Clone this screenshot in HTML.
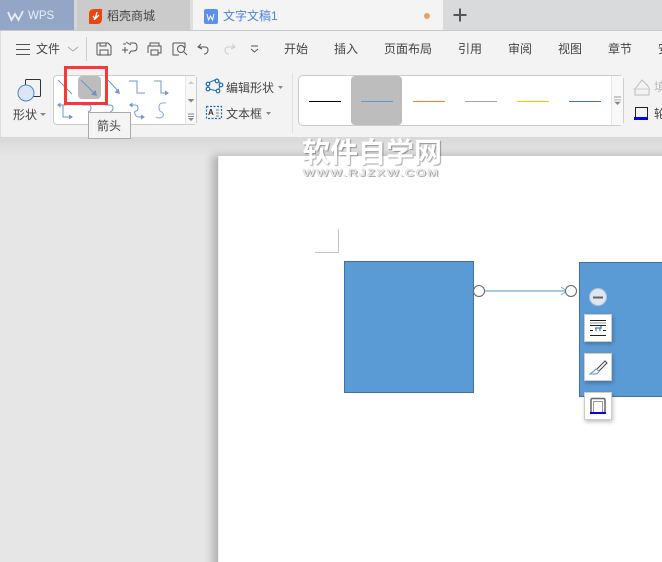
<!DOCTYPE html>
<html><head><meta charset="utf-8">
<style>
*{box-sizing:border-box}
html,body{margin:0;padding:0;width:662px;height:562px;overflow:hidden}
body{position:relative;background:#e6e6e6;font-family:"Liberation Sans","Noto Sans CJK SC",sans-serif;font-size:12px;color:#444}
#w{position:absolute;left:0;top:0;width:662px;height:562px;overflow:hidden;filter:blur(.25px)}
.a{position:absolute}
.t{position:absolute;white-space:nowrap;line-height:16px;font-size:12px}
svg{position:absolute;overflow:visible}
</style></head><body><div id="w">
<!-- tab bar -->
<div class="a" style="left:0;top:0;width:662px;height:31px;background:#d9dadc;border-bottom:1px solid #c8c8c8"></div>
<div class="a" style="left:0;top:0;width:74px;height:30px;background:#94a6c6"></div>
<div class="a" style="left:74px;top:0;width:3px;height:30px;background:#d4d6da"></div>
<div class="a" style="left:77px;top:0;width:113px;height:30px;background:#cbcbcb"></div>
<div class="a" style="left:190px;top:0;width:3px;height:30px;background:#dedede"></div>
<div class="a" style="left:193px;top:0;width:250px;height:30px;background:#f4f4f4"></div>
<svg style="left:0;top:0" width="662" height="31">
<path d="M8 12L11.500 20L15 14L18.500 20L23 11" fill="none" stroke="#e8edf5" stroke-width="1.800"/>
<path d="M89 14q0-5 5-5h8v10q0 5-5 5h-8z" fill="#e8470f"/>
<path d="M97 12q-1 5-3 8M93 16l2 3 4-4" fill="none" stroke="#fff" stroke-width="1.300"/>
<rect x="204" y="9" width="14" height="15" rx="2" fill="#5b8ff0"/>
<path d="M207 14l1.500 6 2-4 2 4 1.500-6" fill="none" stroke="#fff" stroke-width="1"/>
<circle cx="427" cy="16" r="3" fill="#e8a25f"/>
<path d="M453.500 15h13M460 8.500v13" stroke="#555" stroke-width="2"/>
</svg>
<div class="t" style="left:28px;top:8px;font-size:11.500px;color:#e8edf5">WPS</div>
<div class="t" style="left:107px;top:8px;color:#444">稻壳商城</div>
<div class="t" style="left:223px;top:8px;color:#4a82e0">文字文稿1</div>

<!-- ribbon -->
<div class="a" style="left:0;top:31px;width:662px;height:106px;background:#f3f3f3;border-left:1px solid #ddd"></div>
<div class="a" style="left:0;top:137px;width:662px;height:19px;background:linear-gradient(#d8d8d8,#e6e6e6)"></div>
<svg style="left:0;top:0" width="662" height="70" fill="none" stroke="#555" stroke-width="1">
<path d="M16 44.500h14M16 49.500h14M16 54.500h14"/>
<path d="M68 47l5 4 5-4" stroke="#aaa"/>
<path d="M86.500 37v24" stroke="#ccc"/>
<path d="M98 43h10l3 3v8q0 1-1 1H98q-1 0-1-1V44q0-1 1-1zM100 55v-5h8v5M100 43v3h6v-3"/>
<path d="M123 44h3M130 43h4q3 0 3 4t-3 4h-3l-2 3M126 42l5 3M122 50h6M125 47v6"/>
<path d="M150 46v-3h9v3M148 53v-7h13v7h-3M151 50h7v5h-7z"/>
<path d="M173 43h12v5M173 43v12h6"/><circle cx="181" cy="49" r="3.500"/><path d="M184 52l3 3"/>
<path d="M201 44l-3 3 4 2M199 47h6q3 0 3 3t-3 4h-1"/>
<path d="M232 44l3 3-4 2M234 47h-6q-3 0-3 3t3 4h1" stroke="#ccc"/>
<path d="M251 46h7M251 49l3.500 3 3.500-3"/>
</svg>
<div class="t" style="left:36px;top:41px">文件</div>
<div class="t" style="left:284px;top:41px">开始</div>
<div class="t" style="left:334px;top:41px">插入</div>
<div class="t" style="left:384px;top:41px">页面布局</div>
<div class="t" style="left:458px;top:41px">引用</div>
<div class="t" style="left:508px;top:41px">审阅</div>
<div class="t" style="left:558px;top:41px">视图</div>
<div class="t" style="left:608px;top:41px">章节</div>
<div class="t" style="left:658px;top:41px">安全</div>

<!-- shape button -->
<svg style="left:0;top:65px" width="60" height="50" fill="none">
<rect x="25.500" y="14.500" width="15" height="17" rx="1" stroke="#333"/>
<circle cx="26" cy="28" r="8" fill="#dce6f2" stroke="#4a86c8"/>
</svg>
<div class="t" style="left:13px;top:107px">形状</div>
<svg style="left:40px;top:113px" width="6" height="4"><path d="M0 0h6l-3 3z" fill="#888"/></svg>

<!-- gallery -->
<div class="a" style="left:53px;top:75px;width:144px;height:50px;background:#fff;border:1px solid #ccc;border-radius:4px"></div>
<div class="a" style="left:185px;top:76px;width:11px;height:48px;background:#f7f7f7;border-left:1px solid #e8e8e8"></div>
<div class="a" style="left:78px;top:76px;width:23px;height:23px;background:#bdbdbd;border-radius:4px"></div>
<svg style="left:0;top:70px" width="200" height="60" fill="none" stroke="#7396d0" stroke-width="1">
<path d="M58 10l14 14" stroke="#7f93ad"/>
<path d="M81 10l15 15" stroke="#6f8fc8"/><path d="M97 26l-6-1.500 4.500-4.500z" fill="#6f8fc8" stroke="none"/>
<path d="M108 10l11 12"/><path d="M120 24l-5.500-1.500 4-4z" fill="#7396d0" stroke="none"/>
<path d="M129 11h8v12h8"/>
<path d="M154 11h7v12h6"/><path d="M169 23l-4-2.500v5z" fill="#7396d0" stroke="none"/>
<path d="M63 35v12h9M60 35h6"/><path d="M57 35l3.500-2.500v5zM73 47l-4-2.500v5z" fill="#7396d0" stroke="none"/>
<path d="M82 35h6q3 0 3 3t-3 4"/>
<path d="M105 35h5q3 0 3 3t-3 4"/>
<path d="M132 35h3q3 0 3 3v0q0 3-2 3t-1 3q1 3 4 3h4"/><path d="M129 35l3.500-2.500v5zM145 47l-4-2.500v5z" fill="#7396d0" stroke="none"/>
<path d="M166 33q-7-1-7 4t3 5q3 3 0 5t-6 0" stroke="#88a5d5"/>
</svg>
<svg style="left:185px;top:76px" width="12" height="48">
<path d="M3 8l3-3 3 3z" fill="#ccc"/><path d="M2.500 23h7l-3.500 3.500z" fill="#888"/>
<path d="M3 38h6M3 40.500h6" stroke="#888"/><path d="M3 42h6l-3 3z" fill="#888"/>
</svg>

<!-- red box -->
<div class="a" style="left:64px;top:66px;width:44px;height:39px;border:3px solid #f73838"></div>

<!-- tooltip -->
<div class="a" style="left:88px;top:112px;width:43px;height:27px;background:#f4f4f4;border:1px solid #aaa"></div>
<div class="t" style="left:97px;top:118px;color:#444">箭头</div>

<!-- edit shape / text box -->
<svg style="left:200px;top:69px" width="30" height="60" fill="none" stroke="#1e6bb8" stroke-width="1.200">
<path d="M8 14l9-4 4 5-3 7-10-2z" stroke-width="1"/>
<circle cx="8" cy="15" r="1.800" fill="#fff"/><circle cx="17" cy="12" r="1.800" fill="#fff"/><circle cx="21" cy="16" r="1.800" fill="#fff"/><circle cx="18" cy="22" r="1.800" fill="#fff"/><circle cx="8" cy="20" r="1.800" fill="#fff"/>
<rect x="6.500" y="37.500" width="15" height="12" stroke-dasharray="2 1.500"/>
<path d="M16 41h3M16 44h3M16 47h3" stroke="#555" stroke-width=".8"/>
</svg>
<div class="t" style="left:208px;top:107px;font-size:8px;font-weight:bold;line-height:12px;color:#333">A</div>
<div class="t" style="left:226px;top:80px">编辑形状</div>
<div class="t" style="left:226px;top:106px">文本框</div>
<svg style="left:278px;top:86px" width="6" height="4"><path d="M0 0h5l-2.500 3z" fill="#888"/></svg>
<svg style="left:266px;top:112px" width="6" height="4"><path d="M0 0h5l-2.500 3z" fill="#888"/></svg>
<div class="a" style="left:292px;top:73px;width:1px;height:60px;background:#e0e0e0"></div>

<!-- line style gallery -->
<div class="a" style="left:298px;top:75px;width:326px;height:51px;background:#fff;border:1px solid #ccc;border-radius:5px"></div>
<div class="a" style="left:351px;top:76px;width:51px;height:49px;background:#bdbdbd;border-radius:4px"></div>
<div class="a" style="left:309px;top:101px;width:32px;height:1px;background:#000"></div>
<div class="a" style="left:361px;top:101px;width:32px;height:1px;background:#5b9bd5"></div>
<div class="a" style="left:413px;top:101px;width:32px;height:1px;background:#ed7d31"></div>
<div class="a" style="left:465px;top:101px;width:32px;height:1px;background:#a5a5a5"></div>
<div class="a" style="left:517px;top:101px;width:32px;height:1px;background:#ffc000"></div>
<div class="a" style="left:569px;top:101px;width:32px;height:1px;background:#4472c4"></div>
<div class="a" style="left:611px;top:76px;width:12px;height:49px;background:#f8f8f8;border-left:1px solid #e6e6e6"></div>
<svg style="left:612px;top:96px" width="10" height="12"><path d="M2 1h7" stroke="#999"/><path d="M2 3.500h7M2 5h7" stroke="#999" stroke-width=".6"/><path d="M2.500 6h6l-3 3z" fill="#888"/></svg>
<svg style="left:630px;top:75px" width="32" height="50" fill="none">
<path d="M5 14l7-9 5 5q3 3 2 6v4H5z" stroke="#bbb"/><path d="M3 14h15" stroke="#ccc"/>
<rect x="5.500" y="32.500" width="12" height="10" stroke="#222"/>
<rect x="4" y="42" width="14" height="3" fill="#0000e0"/>
</svg>
<div class="t" style="left:654px;top:79px;color:#bbb">填充</div>
<div class="t" style="left:654px;top:106px">轮廓</div>

<!-- page -->
<div class="a" style="left:218px;top:156px;width:460px;height:420px;background:#fff;border-left:1px solid #f0f0f0;box-shadow:-6px -1px 8px rgba(0,0,0,.22)"></div>
<svg style="left:0;top:0" width="662" height="562" fill="none">
<path d="M338.500 229v23.500H315" stroke="#c4c4c4"/>
</svg>

<!-- shapes -->
<div class="a" style="left:344px;top:261px;width:130px;height:132px;background:#5b9bd5;border:1px solid #41719c"></div>
<div class="a" style="left:579px;top:262px;width:90px;height:135px;background:#5b9bd5;border:1px solid #41719c"></div>
<svg style="left:0;top:0" width="662" height="562" fill="none">
<path d="M484 291h82" stroke="#a9c9e6" stroke-width="2"/>
<path d="M561 287l6 4-6 4" stroke="#7aa9dc"/>
<circle cx="479" cy="291" r="5.500" fill="#fff" stroke="#666"/>
<circle cx="571" cy="291" r="5.500" fill="#fff" stroke="#666"/>
<circle cx="598" cy="297" r="8.500" fill="#dde6f1" stroke="#a9c2dc"/>
<path d="M593 297.500h10" stroke="#666" stroke-width="2"/>
</svg>

<!-- float buttons -->
<div class="a" style="left:584px;top:314px;width:28px;height:28px;background:#fff;border:1px solid #ccc;box-shadow:1px 2px 4px rgba(0,0,0,.25)"></div>
<div class="a" style="left:584px;top:353px;width:28px;height:28px;background:#fff;border:1px solid #ccc;box-shadow:1px 2px 4px rgba(0,0,0,.25)"></div>
<div class="a" style="left:584px;top:392px;width:28px;height:28px;background:#fff;border:1px solid #ccc;box-shadow:1px 2px 4px rgba(0,0,0,.25)"></div>
<svg style="left:0;top:0" width="662" height="562" fill="none">
<path d="M590 320.500h16M590 325.500h16M590 330.500h3M603 330.500h3M590 335.500h16" stroke="#222"/>
<path d="M590 323h16" stroke="#555" stroke-width=".6"/>
<path d="M595 328h6v-2M596 328v3M600 328v3" stroke="#4a7ebb" stroke-width="1.300"/>
<path d="M597 369l8-8 2 2-8 8" stroke="#444"/>
<path d="M596 369q-3 3-6 5h6q3-1 3-3z" stroke="#5b8fd8"/>
<path d="M591 412v-12q0-1.500 1.500-1.500h11q1.500 0 1.500 1.500v12" stroke="#666" stroke-width="1.500"/>
<path d="M593.500 412v-10.500h9V412" stroke="#999"/>
<path d="M590 413h16" stroke="#0000e0" stroke-width="2"/>
</svg>

<!-- watermark -->
<div class="t" style="left:302px;top:138px;font-size:28px;line-height:30px;font-weight:bold;color:#fff;text-shadow:1px 1px 1px rgba(0,0,0,.35)">软件自学网</div>
<div class="t" style="left:303px;top:168px;font-size:9px;line-height:10px;color:#f2f2f2;letter-spacing:1.300px;text-shadow:0 0 1px #777,1px 1px 0 #aaa;transform:scaleX(1.39);transform-origin:left top">WWW.RJZXW.COM</div>
</div></body></html>
